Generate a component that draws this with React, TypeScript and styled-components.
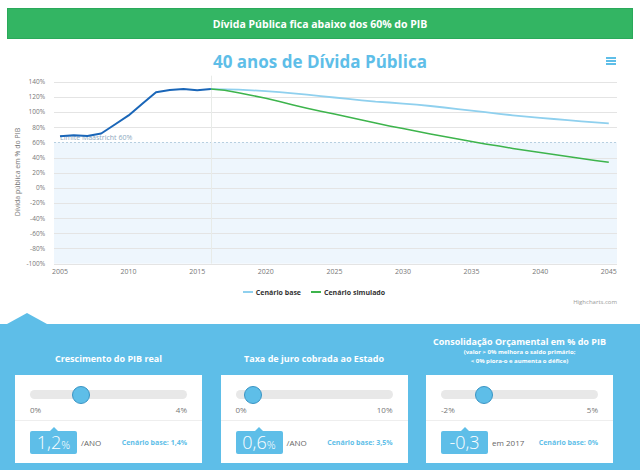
import React from "react";
import styled, { createGlobalStyle } from "styled-components";

const FONT = `"Open Sans", "DejaVu Sans", Arial, sans-serif`;

const Global = createGlobalStyle`
  html, body { margin: 0; padding: 0; background: #ffffff; }
  body { font-family: ${FONT}; width: 640px; height: 470px; overflow: hidden; }
  * { box-sizing: border-box; }
`;

const Page = styled.div`
  width: 640px;
  height: 470px;
  display: flex;
  flex-direction: column;
  overflow: hidden;
`;

const Banner = styled.div`
  margin: 8px 7px 0 7px;
  height: 31px;
  border: 1px solid #2aa95a;
  background: #33b563;
  color: #ffffff;
  font-weight: 700;
  font-size: 10.5px;
  display: flex;
  align-items: center;
  justify-content: center;
`;

const ChartHeader = styled.div`
  position: relative;
  height: 34px;
  display: flex;
  align-items: center;
  justify-content: center;
  padding-top: 11px;
`;

const ChartTitle = styled.h1`
  margin: 0;
  font-size: 17px;
  font-weight: 700;
  color: #5ebee8;
`;

const MenuButton = styled.button`
  position: absolute;
  right: 24px;
  top: 18px;
  width: 10px;
  height: 8px;
  padding: 0;
  border: none;
  background: transparent;
  display: flex;
  flex-direction: column;
  justify-content: space-between;
  span {
    display: block;
    height: 1.6px;
    background: #5ebee8;
  }
`;

const ChartSvg = styled.svg`
  display: block;
  width: 640px;
  height: 208px;
`;

const Legend = styled.div`
  height: 14px;
  margin-top: 4px;
  display: flex;
  justify-content: center;
  align-items: center;
  gap: 10px;
  padding-right: 12px;
`;

const LegendItem = styled.div<{ $color: string }>`
  display: flex;
  align-items: center;
  gap: 3px;
  font-size: 7px;
  font-weight: 700;
  color: #333333;
  &::before {
    content: "";
    width: 10px;
    height: 2px;
    background: ${(p) => p.$color};
  }
`;

const Credits = styled.div`
  height: 7px;
  line-height: 7px;
  text-align: right;
  padding-right: 23px;
  font-size: 6px;
  color: #999999;
`;

const Panel = styled.section`
  position: relative;
  margin-top: 18px;
  flex: 1;
  background: #5ebee8;
  padding: 9px 0 0 15px;
  display: grid;
  grid-template-columns: repeat(3, 187px);
  column-gap: 18.5px;
  &::before {
    content: "";
    position: absolute;
    left: 7px;
    top: -11px;
    border-left: 20px solid transparent;
    border-right: 20px solid transparent;
    border-bottom: 11px solid #5ebee8;
  }
`;

const Column = styled.div`
  display: flex;
  flex-direction: column;
`;

const ColHeader = styled.div`
  height: 32px;
  display: flex;
  flex-direction: column;
  justify-content: flex-end;
  align-items: center;
  text-align: center;
  color: #ffffff;
  font-weight: 700;
`;

const ColTitle = styled.div`
  font-size: 9px;
  line-height: 12px;
`;

const ColNote = styled.div`
  font-size: 6px;
  line-height: 8.5px;
`;

const Card = styled.div`
  margin-top: 10px;
  height: 88px;
  background: #ffffff;
  display: flex;
  flex-direction: column;
`;

const SliderArea = styled.div`
  height: 46px;
  padding: 15px 15px 0 15px;
  border-bottom: 1px solid #eeeeee;
`;

const Track = styled.div`
  position: relative;
  height: 9px;
  border-radius: 5px;
  background: #e8e8e8;
`;

const Thumb = styled.div`
  position: absolute;
  top: 50%;
  width: 18px;
  height: 18px;
  border-radius: 50%;
  background: #5ebee8;
  border: 1px solid #3a94c4;
  transform: translate(-50%, -50%);
`;

const RangeLabels = styled.div`
  margin-top: 6px;
  display: flex;
  justify-content: space-between;
  font-size: 8px;
  line-height: 10px;
  color: #777777;
`;

const ValueRow = styled.div`
  flex: 1;
  padding: 0 15px;
  display: flex;
  align-items: center;
`;

const ValueBox = styled.div`
  position: relative;
  width: 47px;
  height: 23px;
  border-radius: 2px;
  background: #5ebee8;
  color: #ffffff;
  font-weight: 300;
  font-size: 18px;
  display: flex;
  align-items: baseline;
  justify-content: center;
  line-height: 23px;
  &::before {
    content: "";
    position: absolute;
    left: 50%;
    top: -4px;
    margin-left: -4px;
    border-left: 4px solid transparent;
    border-right: 4px solid transparent;
    border-bottom: 4px solid #5ebee8;
  }
  small {
    font-size: 11px;
  }
`;

const Unit = styled.div`
  margin-left: 4px;
  font-size: 8px;
  color: #666666;
`;

const BaseNote = styled.div`
  margin-left: auto;
  font-size: 7px;
  font-weight: 700;
  color: #5ebee8;
`;

/* ---------- chart data ---------- */
const TOP = 73;
const xOf = (year: number) => 60 + (year - 2005) * 13.72;
const yOf = (pct: number) => 81.7 - TOP + (140 - pct) * 0.758;

const hist: [number, number][] = [
  [2005, 68], [2006, 69.4], [2007, 68.4], [2008, 71.7], [2009, 83.6], [2010, 95.5],
  [2011, 111], [2012, 126], [2013, 129], [2014, 130.4], [2015, 128.7], [2016, 130.2],
];
const baseVals = [
  130.2, 130.0, 129.4, 128.6, 127.6, 126.2, 124.6, 122.8, 121.0, 119.1, 117.3, 115.5, 113.8,
  112.5, 111.0, 109.6, 107.9, 105.9, 103.8, 101.7, 99.7, 97.6, 95.7, 94.0, 92.4, 90.8, 89.3,
  87.8, 86.4, 85.1,
];
const simVals = [
  130.2, 128.8, 125.5, 121.8, 118.1, 113.8, 109.2, 105, 101, 97.2, 93.3, 89.4, 85.5, 81.7,
  78.1, 74.6, 71.1, 67.7, 64.3, 61.1, 58.0, 55.0, 52.0, 49.2, 46.5, 43.8, 41.2, 38.7, 36.2,
  33.7,
];
const toPts = (arr: [number, number][]) =>
  arr.map(([y, v]) => `${xOf(y).toFixed(1)},${yOf(v).toFixed(1)}`).join(" ");
const fromVals = (vals: number[]) => toPts(vals.map((v, i) => [2016 + i, v] as [number, number]));

const yTicks = [140, 120, 100, 80, 60, 40, 20, 0, -20, -40, -60, -80, -100];
const xTicks = [2005, 2010, 2015, 2020, 2025, 2030, 2035, 2040, 2045];

const PLOT_L = 54;
const PLOT_R = 617;

const DebtChart: React.FC = () => (
  <ChartSvg viewBox="0 0 640 208">
    <rect x={PLOT_L} y={yOf(60)} width={PLOT_R - PLOT_L} height={yOf(-100) - yOf(60)} fill="#eef6fd" />
    {yTicks.map((t) => (
      <g key={t}>
        {t !== 60 && (
          <line x1={PLOT_L} x2={PLOT_R} y1={Math.round(yOf(t)) + 0.5} y2={Math.round(yOf(t)) + 0.5} stroke="#e4e4e4" strokeWidth={1} />
        )}
        <text x={45} y={yOf(t) + 2.4} textAnchor="end" fontSize={6.5} fill="#777" fontFamily={FONT}>
          {t}%
        </text>
      </g>
    ))}
    <line x1={PLOT_L} x2={PLOT_R} y1={Math.round(yOf(60)) + 0.5} y2={Math.round(yOf(60)) + 0.5} stroke="#b7cfe0" strokeWidth={1} strokeDasharray="2 2" />
    <text x={60} y={yOf(60) - 2.5} fontSize={7} fill="#8ea9c0" fontFamily={FONT}>
      Limite Maastricht 60%
    </text>
    <line x1={211.5} x2={211.5} y1={yOf(140) - 6} y2={yOf(-100)} stroke="#e8ebe8" strokeWidth={1} />
    {xTicks.map((y) => (
      <text key={y} x={xOf(y)} y={yOf(-100) + 10.5} textAnchor="middle" fontSize={7} fill="#777" fontFamily={FONT}>
        {y}
      </text>
    ))}
    <text
      transform={`translate(20 ${172 - TOP}) rotate(-90)`}
      textAnchor="middle"
      fontSize={7}
      fill="#777"
      fontFamily={FONT}
    >
      Dívida pública em % do PIB
    </text>
    <polyline points={fromVals(baseVals)} fill="none" stroke="#8fd0ee" strokeWidth={1.8} strokeLinejoin="round" />
    <polyline points={fromVals(simVals)} fill="none" stroke="#3db44c" strokeWidth={1.5} strokeLinejoin="round" />
    <polyline points={toPts(hist)} fill="none" stroke="#1a66b8" strokeWidth={2} strokeLinejoin="round" />
  </ChartSvg>
);

type SliderProps = {
  title: string;
  notes?: string[];
  min: number;
  max: number;
  value: number;
  minLabel: string;
  maxLabel: string;
  valueText: string;
  percent?: boolean;
  unit: string;
  base: string;
};

const SliderCard: React.FC<SliderProps> = (p) => {
  const frac = (p.value - p.min) / (p.max - p.min);
  const left = 9 + frac * (157 - 18);
  return (
    <Column>
      <ColHeader>
        <ColTitle>{p.title}</ColTitle>
        {p.notes?.map((n) => (
          <ColNote key={n}>{n}</ColNote>
        ))}
      </ColHeader>
      <Card>
        <SliderArea>
          <Track>
            <Thumb style={{ left }} />
          </Track>
          <RangeLabels>
            <span>{p.minLabel}</span>
            <span>{p.maxLabel}</span>
          </RangeLabels>
        </SliderArea>
        <ValueRow>
          <ValueBox>
            {p.valueText}
            {p.percent && <small>%</small>}
          </ValueBox>
          <Unit>{p.unit}</Unit>
          <BaseNote>{p.base}</BaseNote>
        </ValueRow>
      </Card>
    </Column>
  );
};

export default function App() {
  return (
    <Page>
      <Global />
      <Banner>Dívida Pública fica abaixo dos 60% do PIB</Banner>
      <ChartHeader>
        <ChartTitle>40 anos de Dívida Pública</ChartTitle>
        <MenuButton aria-label="menu">
          <span />
          <span />
          <span />
        </MenuButton>
      </ChartHeader>
      <DebtChart />
      <Legend>
        <LegendItem $color="#8fd0ee">Cenário base</LegendItem>
        <LegendItem $color="#3db44c">Cenário simulado</LegendItem>
      </Legend>
      <Credits>Highcharts.com</Credits>
      <Panel>
        <SliderCard
          title="Crescimento do PIB real"
          min={0}
          max={4}
          value={1.2}
          minLabel="0%"
          maxLabel="4%"
          valueText="1,2"
          percent
          unit="/ANO"
          base="Cenário base: 1,4%"
        />
        <SliderCard
          title="Taxa de juro cobrada ao Estado"
          min={0}
          max={10}
          value={0.6}
          minLabel="0%"
          maxLabel="10%"
          valueText="0,6"
          percent
          unit="/ANO"
          base="Cenário base: 3,5%"
        />
        <SliderCard
          title="Consolidação Orçamental em % do PIB"
          notes={["(valor > 0% melhora o saldo primário;", "< 0% piora-o e aumenta o défice)"]}
          min={-2}
          max={5}
          value={-0.3}
          minLabel="-2%"
          maxLabel="5%"
          valueText="-0,3"
          unit="em 2017"
          base="Cenário base: 0%"
        />
      </Panel>
    </Page>
  );
}
